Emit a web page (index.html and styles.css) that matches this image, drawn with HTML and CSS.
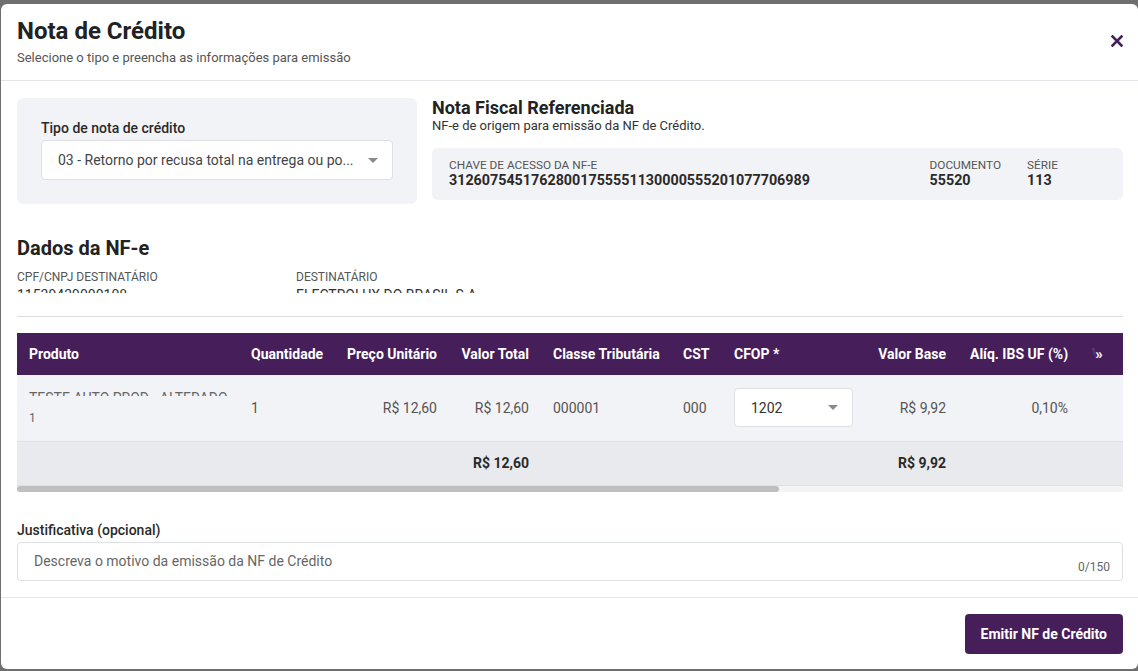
FILE: index.html
```html
<!DOCTYPE html>
<html lang="pt-BR">

    <head>

        <meta charset="UTF-8">
        <meta name="viewport" content="width=device-width, initial-scale=1.0">
        <title>Nota de Crédito</title>

        <link rel="stylesheet" href="styles.css">

    </head>

    <body>

        <main class="modal">

            <header class="modal-header">
                <div>
                    <h1 class="modal-title">Nota de Crédito</h1>
                    <p class="modal-subtitle">Selecione o tipo e preencha as informações para emissão</p>
                </div>
                <button class="close-btn" aria-label="Fechar">
                    <svg width="12" height="12" viewBox="0 0 12 12">
                        <path d="M1.5 1.5 L10.5 10.5 M10.5 1.5 L1.5 10.5" stroke="#45205a" stroke-width="2.6" stroke-linecap="square"/>
                    </svg>
                </button>
            </header>

            <section class="modal-body">

                <div class="top-row">

                    <div class="type-card">
                        <label class="field-label">Tipo de nota de crédito</label>
                        <div class="select type-select">
                            <span>03 - Retorno por recusa total na entrega ou po...</span>
                            <i class="caret"></i>
                        </div>
                    </div>

                    <div class="ref">
                        <h2 class="ref-title">Nota Fiscal Referenciada</h2>
                        <p class="ref-subtitle">NF-e de origem para emissão da NF de Crédito.</p>
                        <div class="ref-card">
                            <div class="ref-item ref-key">
                                <span class="small-label">Chave de acesso da NF-e</span>
                                <strong>31260754517628001755551130000555201077706989</strong>
                            </div>
                            <div class="ref-item">
                                <span class="small-label">Documento</span>
                                <strong>55520</strong>
                            </div>
                            <div class="ref-item ref-serie">
                                <span class="small-label">Série</span>
                                <strong>113</strong>
                            </div>
                        </div>
                    </div>

                </div>

                <h2 class="section-title">Dados da NF-e</h2>

                <div class="nfe-data">
                    <div class="nfe-col nfe-doc">
                        <span class="data-label">CPF/CNPJ Destinatário</span>
                        <div class="clip"><span>11539439000108</span></div>
                    </div>
                    <div class="nfe-col">
                        <span class="data-label">Destinatário</span>
                        <div class="clip"><span>ELECTROLUX DO BRASIL S.A.</span></div>
                    </div>
                </div>

                <div class="table-wrap">

                    <div class="table-scroll">
                        <table class="items">
                            <colgroup>
                                <col style="width: 222px">
                                <col style="width: 96px">
                                <col style="width: 114px">
                                <col style="width: 92px">
                                <col style="width: 130px">
                                <col style="width: 51px">
                                <col style="width: 143px">
                                <col style="width: 93px">
                                <col style="width: 122px">
                                <col style="width: 130px">
                                <col style="width: 130px">
                            </colgroup>
                            <thead>
                                <tr>
                                    <th>Produto</th>
                                    <th>Quantidade</th>
                                    <th class="num">Preço Unitário</th>
                                    <th class="num">Valor Total</th>
                                    <th>Classe Tributária</th>
                                    <th>CST</th>
                                    <th>CFOP *</th>
                                    <th class="num">Valor Base</th>
                                    <th class="num">Alíq. IBS UF (%)</th>
                                    <th>Valor IBS UF</th>
                                    <th class="num">Alíq. IBS Mun (%)</th>
                                </tr>
                            </thead>
                            <tbody>
                                <tr class="item-row">
                                    <td>
                                        <div class="product-name">TESTE AUTO PROD - ALTERADO)</div>
                                        <div class="product-code">1</div>
                                    </td>
                                    <td>1</td>
                                    <td class="num">R$ 12,60</td>
                                    <td class="num">R$ 12,60</td>
                                    <td>000001</td>
                                    <td>000</td>
                                    <td>
                                        <div class="select cfop-select">
                                            <span>1202</span>
                                            <i class="caret"></i>
                                        </div>
                                    </td>
                                    <td class="num">R$ 9,92</td>
                                    <td class="num">0,10%</td>
                                    <td class="num">R$ 0,01</td>
                                    <td class="num">0,00%</td>
                                </tr>
                                <tr class="total-row">
                                    <td></td>
                                    <td></td>
                                    <td></td>
                                    <td class="num">R$ 12,60</td>
                                    <td></td>
                                    <td></td>
                                    <td></td>
                                    <td class="num">R$ 9,92</td>
                                    <td></td>
                                    <td></td>
                                    <td></td>
                                </tr>
                            </tbody>
                        </table>
                    </div>

                    <span class="more-cols">»</span>

                    <div class="scrollbar"><div class="scroll-thumb"></div></div>

                </div>

                <label class="field-label justify-label">Justificativa (opcional)</label>
                <div class="textarea">
                    <span class="placeholder">Descreva o motivo da emissão da NF de Crédito</span>
                    <span class="counter">0/150</span>
                </div>

            </section>

            <footer class="modal-footer">
                <button class="primary-btn">Emitir NF de Crédito</button>
            </footer>

        </main>

    </body>

</html>
```

FILE: styles.css
```css
* 
    {
        margin: 0;
        padding: 0;
        box-sizing: border-box;
    }

body 
    {
        font-family: Roboto, 'Liberation Sans', sans-serif;
        background-color: #6f6f6f;
        padding: 4px 0 2px 1px;
        height: 100vh;
        overflow: hidden;
        color: #222;
    }

.modal 
    {
        background-color: #fff;
        border-radius: 6px;
        height: 665px;
        display: flex;
        flex-direction: column;
        overflow: hidden;
    }

.modal-header 
    {
        display: flex;
        justify-content: space-between;
        align-items: center;
        padding: 12px 15px 14px 16px;
        border-bottom: 1px solid #e2e4e8;
    }

.modal-title 
    {
        font-size: 24px;
        line-height: 30px;
        font-weight: 700;
        color: #222;
    }

.modal-subtitle 
    {
        margin-top: 4px;
        font-size: 13px;
        line-height: 16px;
        color: #555;
    }

.close-btn 
    {
        border: none;
        background: none;
        width: 12px;
        height: 12px;
        display: flex;
        cursor: pointer;
    }

.modal-body 
    {
        padding: 17px 15px 16px 16px;
        border-bottom: 1px solid #e2e4e8;
    }

.top-row 
    {
        display: flex;
        align-items: flex-start;
        gap: 15px;
    }

.type-card 
    {
        width: 400px;
        flex-shrink: 0;
        background-color: #f2f3f6;
        border-radius: 6px;
        padding: 22px 24px 24px 24px;
    }

.field-label 
    {
        display: block;
        font-size: 14px;
        line-height: 16px;
        font-weight: 500;
        color: #2a2a2a;
        margin-bottom: 4px;
    }

.select 
    {
        display: flex;
        align-items: center;
        justify-content: space-between;
        background-color: #fff;
        border: 1px solid #dcdfe4;
        border-radius: 4px;
        font-size: 14px;
        color: #444;
    }

.type-select 
    {
        height: 40px;
        padding: 0 14px 0 16px;
    }

.caret 
    {
        width: 0;
        height: 0;
        border-left: 5px solid transparent;
        border-right: 5px solid transparent;
        border-top: 5px solid #8a8a8a;
    }

.ref 
    {
        flex: 1;
    }

.ref-title 
    {
        font-size: 18px;
        line-height: 20px;
        font-weight: 700;
        color: #222;
    }

.ref-subtitle 
    {
        font-size: 13px;
        line-height: 16px;
        color: #333;
    }

.ref-card 
    {
        margin-top: 14px;
        background-color: #f2f3f6;
        border-radius: 6px;
        padding: 10px 16px 12px 17px;
        display: flex;
        gap: 26px;
    }

.ref-item 
    {
        display: flex;
        flex-direction: column;
    }

.ref-key 
    {
        flex: 1;
    }

.ref-serie 
    {
        width: 80px;
    }

.small-label 
    {
        font-size: 11.8px;
        line-height: 14px;
        text-transform: uppercase;
        color: #555;
    }

.ref-item strong 
    {
        font-size: 14.3px;
        line-height: 16px;
        font-weight: 700;
        color: #2a2a2a;
    }

.section-title 
    {
        margin-top: 34px;
        font-size: 20px;
        line-height: 20px;
        font-weight: 700;
        color: #222;
    }

.nfe-data 
    {
        display: flex;
        margin-top: 12px;
        padding-bottom: 23px;
        border-bottom: 1px solid #d9dde2;
    }

.nfe-doc 
    {
        width: 279px;
    }

.data-label 
    {
        display: block;
        font-size: 12px;
        line-height: 14px;
        text-transform: uppercase;
        color: #555;
    }

.clip 
    {
        height: 8px;
        overflow: hidden;
        margin-top: 1px;
    }

.clip span 
    {
        display: block;
        font-size: 14px;
        line-height: 16px;
        color: #333;
        margin-top: 2px;
    }

.table-wrap 
    {
        position: relative;
        margin-top: 16px;
    }

.table-scroll 
    {
        overflow: hidden;
    }

.items 
    {
        table-layout: fixed;
        width: 1323px;
        border-collapse: collapse;
        font-size: 14px;
    }

.items th 
    {
        height: 42px;
        padding: 0 12px;
        background-color: #451e5a;
        color: #fff;
        font-weight: 700;
        text-align: left;
        white-space: nowrap;
    }

.items td 
    {
        padding: 0 12px;
        color: #555;
        white-space: nowrap;
    }

.items .num 
    {
        text-align: right;
    }

.item-row td 
    {
        height: 66px;
        background-color: #f2f3f6;
        border-bottom: 1px solid #dde0e5;
    }

.total-row td 
    {
        height: 44px;
        background-color: #e8eaee;
        border-bottom: 1px solid #dde0e5;
        font-weight: 700;
        color: #2a2a2a;
    }

.product-name 
    {
        height: 7px;
        overflow: hidden;
        line-height: 18px;
        color: #666;
        margin-bottom: 14px;
    }

.product-code 
    {
        font-size: 12px;
        line-height: 16px;
        color: #666;
    }

.cfop-select 
    {
        width: 119px;
        height: 39px;
        padding: 0 14px 0 16px;
        color: #333;
    }

.more-cols 
    {
        position: absolute;
        top: 0;
        right: 0;
        width: 40px;
        height: 42px;
        display: flex;
        align-items: center;
        justify-content: center;
        padding-right: 8px;
        background: linear-gradient(to right, rgba(69, 30, 90, 0.5), #451e5a 35%);
        color: #fff;
        font-size: 15px;
        font-weight: 700;
    }

.scrollbar 
    {
        height: 6px;
        background-color: #f4f4f4;
    }

.scroll-thumb 
    {
        width: 762px;
        height: 6px;
        border-radius: 3px;
        background-color: #bfbfbf;
    }

.justify-label 
    {
        margin-top: 30px;
    }

.textarea 
    {
        position: relative;
        height: 39px;
        border: 1px solid #dcdfe4;
        border-radius: 4px;
        padding: 8px 12px 0 16px;
    }

.placeholder 
    {
        font-size: 14px;
        line-height: 16px;
        color: #666;
    }

.counter 
    {
        position: absolute;
        right: 12px;
        bottom: 6px;
        font-size: 12px;
        color: #666;
    }

.modal-footer 
    {
        display: flex;
        justify-content: flex-end;
        padding: 16px 15px;
    }

.primary-btn 
    {
        height: 40px;
        padding: 0 16px;
        border: none;
        border-radius: 4px;
        background-color: #451e5a;
        color: #fff;
        font-family: inherit;
        font-size: 14px;
        font-weight: 700;
        cursor: pointer;
    }
```
